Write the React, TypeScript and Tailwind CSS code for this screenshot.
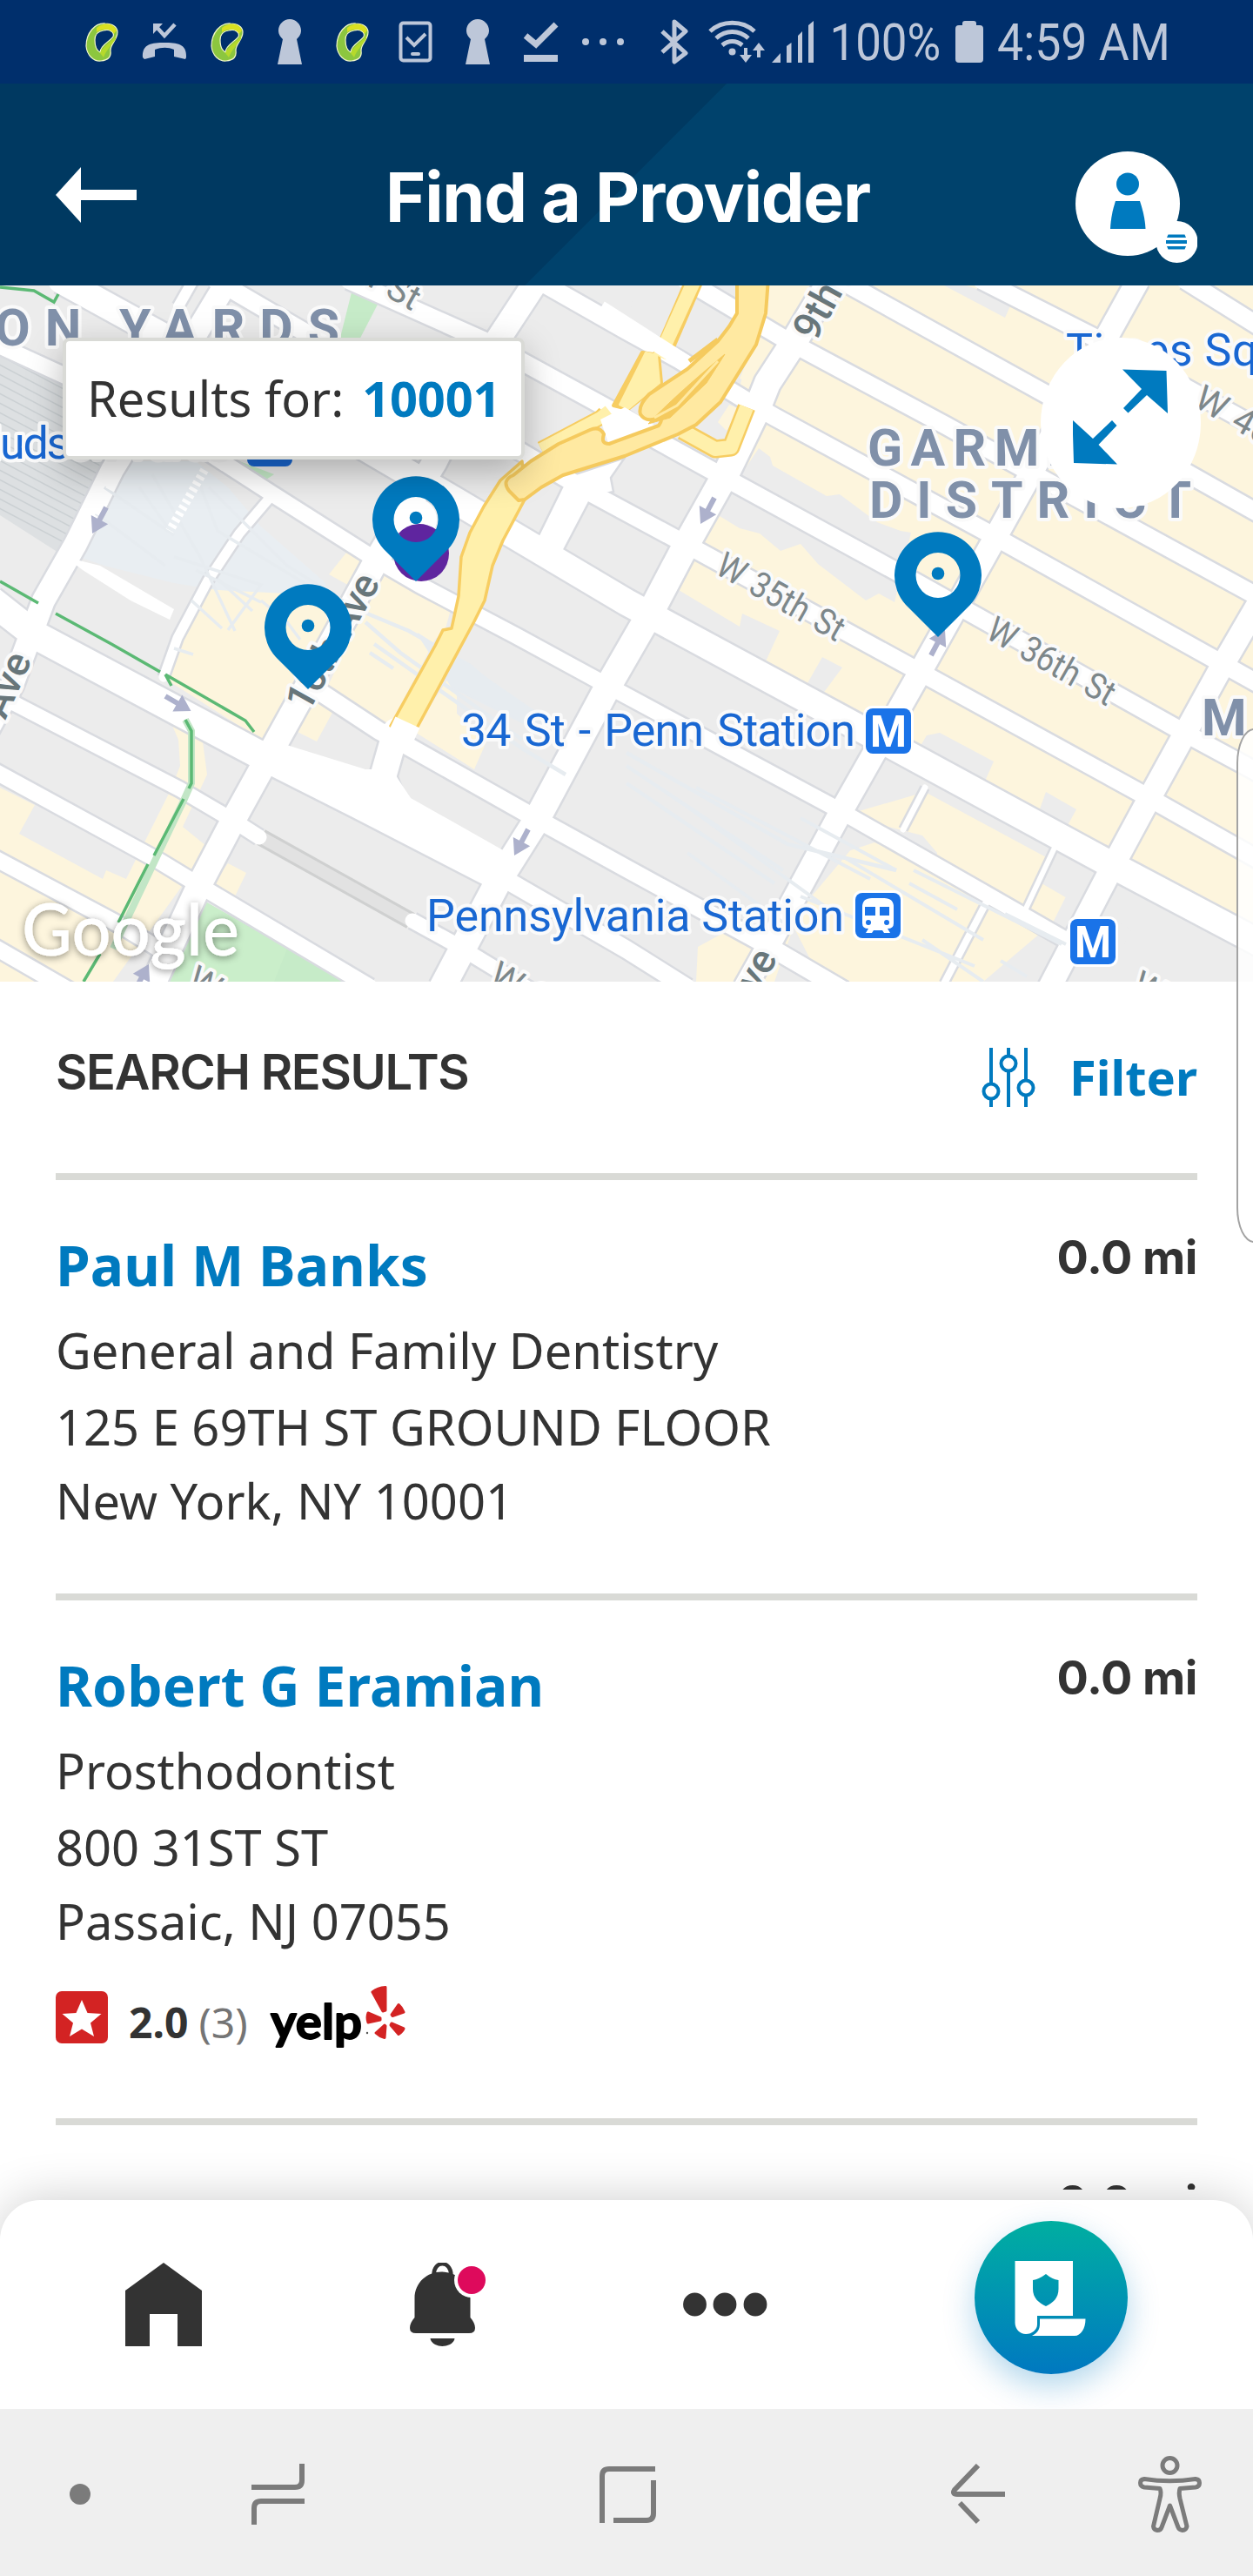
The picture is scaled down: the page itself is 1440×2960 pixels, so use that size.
import type { ReactNode } from "react";

const BLUE = "#007abf";
const STATUS = "#bdc7d9";

/* ---------- status bar ---------- */

function Cell({ children }: { children: ReactNode }) {
  return (
    <svg className="h-24 w-[72px] shrink-0" viewBox="0 0 72 96" fill={STATUS}>
      {children}
    </svg>
  );
}

function LoopIcon() {
  return (
    <Cell>
      <path
        fillRule="evenodd"
        fill="#8cc63f"
        stroke="#f2f7c9"
        strokeWidth="1.2"
        d="M40 27C28 26 18 38 18 53C19 64 27 71 35 70C44 69 47 65 46 58C46 50 54 46 54 37C54 31 48 27 40 27ZM38 35C45 33 51 37 49 42C46 47 34 52 34 60C30 58 28 52 28 46C28 40 31 36 38 35Z"
      />
      <path d="M30 32C38 25 50 26 53 35L50 39C47 33 38 32 30 37Z" fill="#d9e021" />
      <path d="M52 40C50 47 37 52 34 61L38 66C41 58 47 52 52 45Z" fill="#b5d92c" />
    </Cell>
  );
}

function KeyholeIcon() {
  return (
    <Cell>
      <path d="M36 22C43 22 49 28 49 35C49 40 46 43 44 45L50 74H22L28 45C26 43 23 40 23 35C23 28 29 22 36 22Z" />
    </Cell>
  );
}

function StatusBar() {
  return (
    <div className="flex h-24 shrink-0 items-center bg-[#002f6c] pl-[81px]">
      <LoopIcon />
      <Cell>
        <path d="M11 66C10 50 22 49 36 49C50 49 62 50 61 66L60 68L47 65V57C40 54 33 54 25 57V65L13 68Z" />
        <path d="M26 30L36 41L48 28" fill="none" stroke={STATUS} strokeWidth="4.5" />
        <path d="M23 27H34L23 39Z" />
      </Cell>
      <LoopIcon />
      <KeyholeIcon />
      <LoopIcon />
      <Cell>
        <rect x="19.500" y="26.500" width="34" height="43" rx="3" fill="none" stroke={STATUS} strokeWidth="4" />
        <path d="M26 43L35 52L48 39" fill="none" stroke={STATUS} strokeWidth="4" />
        <rect x="31" y="60" width="11" height="4" rx="2" />
      </Cell>
      <KeyholeIcon />
      <Cell>
        <path d="M19 41L31 51L54 28" fill="none" stroke={STATUS} strokeWidth="7" />
        <rect x="17" y="63" width="39" height="8" />
      </Cell>
      <Cell>
        <circle cx="16" cy="48" r="4" />
        <circle cx="36" cy="48" r="4" />
        <circle cx="56" cy="48" r="4" />
      </Cell>
      <svg className="ml-[21px] h-24 w-[48px] shrink-0" viewBox="750 0 48 96" fill="none" stroke={STATUS} strokeWidth="5">
        <path d="M761 36L788 61L775 71V25L788 36L761 60" strokeLinejoin="round" />
      </svg>
      <svg className="h-24 w-[152px] shrink-0" viewBox="798 0 152 96" fill={STATUS}>
        <g fill="none" stroke={STATUS} strokeWidth="5">
          <path d="M816 36C830 23 853 23 867 36" />
          <path d="M823 44C834 34 849 34 860 44" />
          <path d="M830 52C837 46 846 46 853 52" />
          <path d="M857 55V67M872 66V54" strokeWidth="4" />
        </g>
        <circle cx="841.500" cy="59.500" r="4" />
        <path d="M850 63H864L857 72ZM865 58L872 49L879 58Z" />
        <path d="M887 72L897 61V72ZM904 72V53L909.500 49V72ZM917 72V41L922 36V72ZM929 72V29L935 24V72Z" />
      </svg>
      <div className="flex h-24 w-[147px] items-center">
        <span className="origin-left scale-x-[0.88] pt-[2px] pl-[4px] font-[Roboto] text-[60px] leading-[96px] whitespace-nowrap text-[#bdc7d9]">
          100%
        </span>
      </div>
      <svg className="ml-px h-24 w-[32px] shrink-0" viewBox="0 0 32 96" fill={STATUS}>
        <path d="M8 29V27Q8 24 11 24H21Q24 24 24 27V29H28Q32 29 32 33V68Q32 72 28 72H4Q0 72 0 68V33Q0 29 4 29Z" />
      </svg>
      <span className="ml-[16px] origin-left scale-x-[0.895] pt-[2px] font-[Roboto] text-[60px] leading-[96px] whitespace-nowrap text-[#bdc7d9]">
        4:59 AM
      </span>
    </div>
  );
}

/* ---------- app header ---------- */

function Header() {
  return (
    <header className="flex h-[232px] shrink-0 items-start justify-between bg-[linear-gradient(135deg,#003961_0,#003961_calc(50%-1px),#00426c_50%)] px-16">
      <svg className="mt-[96px] h-[64px] w-[93px]" viewBox="0 0 93 64" fill="#fff">
        <path d="M0 32L29 0V26H93V38H29V64Z" />
      </svg>
      <h1 className="mt-[83px] ml-[50px] font-[Inter] text-[79px] leading-[94px] font-bold tracking-[-1.300px] whitespace-nowrap text-white">
        Find a Provider
      </h1>
      <svg className="mt-[78px] h-[128px] w-[140px]" viewBox="1236 174 140 128">
        <circle cx="1296" cy="234" r="60" fill="#fff" />
        <circle cx="1352.500" cy="278" r="24" fill="#fff" />
        <circle cx="1296" cy="211.500" r="13" fill={BLUE} />
        <path d="M1282 231H1310C1314 243 1316 253 1316.500 263H1276C1276.500 253 1278 243 1282 231Z" fill={BLUE} />
        <path d="M1342.500 269.500H1361.500L1363 273H1341ZM1340 276H1364V280H1340ZM1341 283H1363L1361.500 286.500H1342.500Z" fill={BLUE} />
      </svg>
    </header>
  );
}

/* ---------- map ---------- */

const streets: { d: string; w: number }[] = [
  { d: "M1362 322L1450 377", w: 20 },
  { d: "M1128 322L1262 390L1450 494", w: 20 },
  { d: "M966 322L1197 450L1363 543L1450 592", w: 20 },
  { d: "M788 322L904 391L1087 489L1179 540L1450 688", w: 20 },
  { d: "M618 322L720 380L780 413L862 463L890 479L1133 611L1400 760L1450 788", w: 20 },
  { d: "M401 322L555 391L707 474L748 502L835 550L1040 662L1363 843L1450 890", w: 20 },
  { d: "M248 322L390 405L600 520L680 567L795 629L1055 771L1321 917L1450 990", w: 20 },
  { d: "M70 322L190 388L400 503L523 575L720 692L1018 853L1276 993L1450 1085", w: 30 },
  { d: "M-10 393L75 432L239 520L312 567L427 640L482 672L592 730L693 785L959 928L1138 1030L1225 1080", w: 18 },
  { d: "M360 790L436 840L468 857L615 940L720 998L881 1086L970 1138", w: 20 },
  { d: "M-10 690L41 730L294 865L413 925L574 1008", w: 32 },
  { d: "M580 1010L720 1091L790 1135", w: 20 },
  { d: "M14 807L207 907L270 944L298 962", w: 17 },
  { d: "M474 1058L523 1085L610 1138", w: 17 },
  { d: "M-10 884L184 990L230 1018L425 1134", w: 18 },
  { d: "M-10 984L138 1063L190 1095", w: 18 },
  { d: "M-10 1086L80 1138", w: 18 },
  { d: "M955 322L908 400L882 440L868 475L835 543L789 625L747 705L698 790L615 945L574 1010L508 1135", w: 30 },
  { d: "M1308 322L1152 603L1057 773L968 930L883 1087L856 1135", w: 26 },
  { d: "M1460 670L1404 766L1321 917L1280 993L1206 1135", w: 26 },
  { d: "M617 322L569 395L500 530L432 645L390 722L330 830L271 937L230 1015L174 1135", w: 28 },
  { d: "M262 322L215 400L129 540L87 625L50 690L14 787L-15 840", w: 26 },
  { d: "M222 322L205 352", w: 12 },
  { d: "M310 572L275 613L239 667L204 733L188 778", w: 11 },
  { d: "M455 840L440 893L460 945", w: 30 },
  { d: "M1063 905L1038 953", w: 7 },
  { d: "M1212 974L1178 1046", w: 6 },
  { d: "M1135 1034L1085 1130", w: 8 },
];

const highwayLow = "M600 530L575 552L556 582L540 612L530 640L527 685L519 722L509 724L500 742L449 834L474 846L545 714L557 690L566 650L578 621L603 574Z";
const highwayHigh =
  "M847 320V360L838 375L825 392L790 424L746 453Q733 466 736 476Q742 486 757 480Q763 480 757 489L700 510Q690 510 694 499Q689 489 678 494L642 510L610 530L590 546Q576 552 585 564L596 575L603 574L622 560L647 546L718 524L779 499L800 488L828 462L869 396L880 360L883 320Z";

const arrows = [
  [122, 583, 118], [821, 572, 118], [190, 800, 30], [607, 953, 118], [1070, 753, -62], [155, 1138, -62],
];

const railStripes = Array.from({ length: 20 }, (_, i) => i);

function MapArt() {
  return (
    <svg className="block h-[800px] w-[1440px]" viewBox="0 328 1440 800" fontFamily="Roboto, sans-serif">
      <defs>
        <clipPath id="yard">
          <path d="M0 405L80 445L140 530L75 640L0 592Z" />
        </clipPath>
        <filter id="soft" x="-20%" y="-20%" width="140%" height="140%">
          <feDropShadow dx="0" dy="2" stdDeviation="4" floodColor="#000" floodOpacity="0.45" />
        </filter>
      </defs>
      <rect y="328" width="1440" height="800" fill="#ececec" />

      {/* commercial blocks */}
      <g fill="#fdf5dd">
        <path d="M880 328H1440V1075L1276 993L1018 853L738 706L835 543L868 475L850 445Z" />
        <path d="M1063 910L1230 1000L1240 1000L1210 1060L1130 1128H850L1000 950L960 940Z" />
        <path d="M802 1088L835 1070L870 1090L925 1128H800Z" />
        <path d="M225 690L250 645L300 665L390 690L398 700L330 828L300 850L190 780Z" />
        <path d="M440 655L519 697L512 722L500 735L449 832L470 840L430 835L375 792Z" />
        <path d="M402 630L422 640L405 675L378 660Z" />
        <path d="M355 800L383 817L364 852L340 840ZM475 840L515 780L525 800L525 820L560 850L545 884Z" />
        <path d="M0 905L40 925L22 958L118 1010L122 1000L145 1010L160 980L195 910L207 880L205 850L190 815L230 830L238 890L210 950L237 972L215 1010L130 1128H0Z" />
        <path d="M262 992L283 1003L270 1030L243 1018Z" />
      </g>
      <g fill="#ececec">
        <path d="M872 515L885 525L888 535L950 570L965 568L1008 600L1035 610L1047 612L1028 692L1010 682L995 690L940 648L920 625L897 633L873 613L850 607L822 590Z" />
        <path d="M780 678L850 720L853 705L896 725L880 760L755 700Z" />
        <path d="M1065 328H1110L1164 345L1155 365L1085 328Z" />
        <path d="M945 755L968 767L945 798L928 785ZM1065 845L1080 842L1142 875L1130 902L1056 860Z" />
        <path d="M1202 910L1237 930L1225 952L1193 935Z" />
        <path d="M1215 975L1265 1003L1240 1040L1197 1015Z" />
        <path d="M982 940L1060 960L1077 980L1075 990L1020 975L1005 968L975 978Z" />
        <path d="M1284 1014L1440 1095V1128H1272L1300 1068L1270 1052Z" />
        <path d="M730 328H870L850 420L720 510H700Z" />
        <path d="M912 1065L930 1100L955 1128H890Z" />
      </g>
      <path d="M872 385L898 402L870 442L850 435ZM838 465L850 470L835 495L825 485Z" fill="#fdf5dd" />

      {/* parks */}
      <g fill="#c6ebc8">
        <path d="M234 1035L399 1128H192Z" />
        <path d="M406 328L438 342L408 400H388Z" />
        <path d="M270 528L315 545L303 553L285 540Z" />
      </g>
      <path d="M234 1035L330 1090L315 1128H192Z" fill="#caeeca" />

      {/* rail yard */}
      <path d="M0 405L80 445L140 530L75 640L0 592Z" fill="#dde0e2" />
      <g clipPath="url(#yard)" stroke="#cbd0d3" strokeWidth="1.500">
        {railStripes.map((i) => (
          <path key={i} d={`M-10 ${370 + i * 11}L170 ${465 + i * 11}`} />
        ))}
      </g>
      <path d="M133 530H225L262 560L300 605L372 668L392 700L330 682L250 678L200 670L120 650L85 638Z" fill="#e9eef2" />

      {/* streets */}
      <g fill="none" stroke="#d9dbe0" strokeLinejoin="round">
        {streets.map((s) => (
          <path key={s.d} d={s.d} strokeWidth={s.w + 5} />
        ))}
        <path d="M300 962L472 1058" stroke="#cfd0d0" strokeWidth="20" />
        <path d="M300 962L472 1058" stroke="#e2e2e2" strokeWidth="14" />
      </g>
      <path d="M652 548L718 526L702 549L705 565L680 571L647 634L617 619Z" fill="#fff" stroke="#d9dbe0" strokeWidth="2.500" />
      <g fill="none" stroke="#fff" strokeLinejoin="round" strokeLinecap="round">
        {streets.map((s) => (
          <path key={s.d} d={s.d} strokeWidth={s.w} />
        ))}
      </g>
      <path d="M310 850L420 884L450 884L472 917L580 978L562 1014L465 962L422 946L300 878Z" fill="#fff" />

      {/* rail lines */}
      <g stroke="#e7ecf0" fill="none">
        <path d="M120 560L200 615M110 590L190 650M175 545L230 640M225 545L250 610L400 700M240 560L330 650L410 700M200 640L300 672L262 724M225 655L300 692M250 665L290 702M220 690L255 722M160 560L192 605M230 640L270 725M300 690L330 715L345 735M200 745L222 752" strokeWidth="3.500" />
        <path d="M410 700L470 725L540 765L640 850M420 715L460 750L600 850M430 740L600 860L650 890M425 750L452 768M720 880L900 1000M720 900L890 1015M720 865L905 970L1030 1000" strokeWidth="4.500" />
        <path d="M480 728L560 780L640 835L600 830L520 790Z" fill="#e7ecf0" strokeWidth="2" />
        <path d="M780 920L960 1050M800 905L1000 1010M920 1030L1120 1110M970 985L1130 1080M1050 1000L1220 1085M1045 1015L1100 1045M1060 1080L1130 1128M1155 1050L1225 1085M1150 1104L1180 1122M920 940L1030 1000M790 980L900 1060" strokeWidth="4" />
      </g>
      <g fill="none" stroke="#fff" strokeDasharray="4 4" strokeWidth="10">
        <path d="M235 540L195 610M135 545L90 630" />
      </g>
      <path d="M75 640L115 650L200 700L195 712L150 690L95 655Z" fill="#fff" />

      {/* highway ramps */}
      <g fill="none" strokeLinejoin="round">
        <g stroke="#f7cd62">
          <path d="M798 322L760 410" strokeWidth="21" />
          <path d="M757 408L760 440L722 470L705 466L738 405Z" fill="#f7cd62" strokeWidth="4" />
          <path d="M695 475L690 480L622 516" strokeWidth="18" />
          <path d="M784 495L822 516L840 514L858 468" strokeWidth="21" />
        </g>
        <g stroke="#fff0ab">
          <path d="M798 322L758 410" strokeWidth="16" />
          <path d="M755 408L758 440L722 470L712 465L742 405Z" fill="#fff0ab" strokeWidth="2" />
          <path d="M700 472L690 480L622 516" strokeWidth="14" />
          <path d="M784 495L822 516L840 514L858 468" strokeWidth="16" />
        </g>
        <path d={highwayLow} fill="#fff0ab" stroke="#f7cd62" strokeWidth="3.500" />
        <path d="M690 354L790 418" stroke="#fff" strokeWidth="18" />
        <path d="M690 482L718 468L748 486L757 492L700 512Z" fill="#fff" />
        <path d={highwayHigh} fill="#ffe9a1" stroke="#f5ca5e" strokeWidth="4" />
        <path d="M833 407L812 440L770 480L745 487Q775 455 833 407Z" fill="#f5ca5e" stroke="#f5ca5e" strokeWidth="1" />
        <path d="M825 415L778 466L752 480" stroke="#ffe9a1" strokeWidth="3" />
        <path d="M825 390L792 415" stroke="#f5ca5e" strokeWidth="5" />
      </g>
      <path d="M450 833L478 846" stroke="#fff" strokeWidth="21" />

      {/* bike routes */}
      <g fill="none">
        <path d="M213 827L220 840V900L211 920L168 1010L130 1090" stroke="#c2e6c6" strokeWidth="8" />
        <g stroke="#5bb974" strokeWidth="3.500">
          <path d="M0 330L39 334L62 347L67 338M0 668L44 693M64 705L128 740L184 772M190 775L282 828L292 841M190 775L197 788" />
          <path d="M213 827L220 840V900L217 906M211 918L177 983M170 993L136 1060M115 1096L96 1128" />
        </g>
      </g>

      {arrows.map(([x, y, r]) => (
        <path key={`${x}-${y}`} transform={`translate(${x} ${y}) rotate(${r})`} d="M0 -3H16V-11L34 0L16 11V3H0Z" fill="#adb1cc" />
      ))}

      {/* labels */}
      <g stroke="#fafafa" strokeWidth="8" paintOrder="stroke" strokeLinejoin="round">
        <g fill="#8090a9" fontWeight="700" fontSize="59">
          <text x="-6" y="397" letterSpacing="17">ON</text>
          <text x="137" y="397" textLength="253">YARDS</text>
          <text x="997" y="535" textLength="336">GARMENT</text>
          <text x="999" y="595" textLength="370">DISTRICT</text>
          <text x="1381" y="845">M</text>
        </g>
        <g fill="#1967d2" fontSize="52">
          <text x="-35" y="527" textLength="300">Hudson Yards</text>
          <text x="530" y="857" textLength="453" wordSpacing="4">34 St - Penn Station</text>
          <text x="490" y="1070" textLength="480">Pennsylvania Station</text>
          <text x="1225" y="420" letterSpacing="0.500">Times Sq</text>
        </g>
        <g fill="#7d878a" fontSize="41" wordSpacing="3">
          <text transform="translate(820 658) rotate(29.500)" textLength="162" lengthAdjust="spacingAndGlyphs">W 35th St</text>
          <text transform="translate(1131 732) rotate(29.500)" textLength="162" lengthAdjust="spacingAndGlyphs">W 36th St</text>
          <text transform="translate(1370 466) rotate(29.500)">W 40th St</text>
          <text transform="translate(358 292) rotate(29.500)" textLength="133">38th St</text>
          <text transform="translate(213 1133) rotate(29.500)">W 29th St</text>
          <text transform="translate(560 1128) rotate(29.500)">W 30th St</text>
          <text transform="translate(1298 1139) rotate(29.500)">W 34th St</text>
        </g>
        <g fill="#68767a" fontSize="46" fontWeight="500">
          <text transform="translate(937 394) rotate(-61)">9th Ave</text>
          <text transform="translate(354 820) rotate(-61)" textLength="172">10th Ave</text>
          <text transform="translate(6 828) rotate(-66)">Ave</text>
          <text transform="translate(857 1168) rotate(-61)">Ave</text>
        </g>
      </g>

      {/* transit badges */}
      <g>
        <rect x="284" y="484" width="52" height="52" rx="8" fill="#1967d2" />
        {[[995, 814], [1230, 1056]].map(([x, y]) => (
          <g key={x}>
            <rect x={x - 3} y={y - 3} width="58" height="58" rx="10" fill="#fff" />
            <rect x={x} y={y} width="52" height="52" rx="8" fill="#1a73e8" />
            <text x={x + 26} y={y + 44} fontSize="50" fontWeight="700" fill="#fff" textAnchor="middle" textLength="42" lengthAdjust="spacingAndGlyphs">
              M
            </text>
          </g>
        ))}
        <rect x="980" y="1023" width="58" height="58" rx="10" fill="#fff" />
        <rect x="983" y="1026" width="52" height="52" rx="8" fill="#1a73e8" />
        <path d="M991 1042Q991 1032 1002 1032H1016Q1027 1032 1027 1042V1061Q1027 1067 1020 1067L1023 1072H1016L1014 1069H1004L1002 1072H995L998 1067Q991 1067 991 1061Z" fill="#fff" />
        <path d="M994 1042H1006V1052H994ZM1011 1042H1022V1052H1011Z" fill="#1a73e8" />
        <circle cx="998" cy="1060" r="3" fill="#1a73e8" />
        <circle cx="1019" cy="1060" r="3" fill="#1a73e8" />
      </g>
      <text x="25" y="1098" fontFamily="Lato" fontWeight="500" fontSize="83" fill="#fff" textLength="250" lengthAdjust="spacingAndGlyphs" filter="url(#soft)">
        Google
      </text>

      {/* provider pins */}
      <circle cx="484" cy="636" r="32" fill="#5f259f" />
      <circle cx="478" cy="597" r="24" fill="#fff" />
      <path d="M458 613A32 32 0 0 1 502 609A25 25 0 0 1 458 613Z" fill="#5f259f" />
      {[[428, 548], [304, 672], [1028, 612]].map(([x, y]) => (
        <g key={x} transform={`translate(${x} ${y})`} fill={BLUE}>
          <path fillRule="evenodd" d="M50 120L13 83A50 50 0 1 1 87 83ZM50 23A25.500 26 0 1 0 50 75A25.500 26 0 1 0 50 23Z" />
          <circle cx="50" cy="47" r="7.300" />
        </g>
      ))}
    </svg>
  );
}

function MapPanel() {
  return (
    <section className="relative h-[800px] shrink-0 overflow-hidden">
      <MapArt />
      <div className="absolute top-[60px] left-[72px] flex h-[140px] w-[531px] items-center rounded-lg border-4 border-[#d9dad6] bg-white pb-[2px] pl-[24px] font-['Noto_Sans'] text-[56px] leading-[80px] whitespace-nowrap text-[#333] shadow-[0_14px_40px_rgba(0,0,0,0.28)]">
        <span>Results for:</span>
        <span className="ml-[21px] font-bold tracking-[-0.200px] text-[#007abf]">10001</span>
      </div>
      <button className="absolute top-[60px] left-[1196px] flex h-[196px] w-[184px] items-center justify-center rounded-[50%] bg-white">
        <svg className="-mt-[14px] h-[110px] w-[110px]" viewBox="1233 424 110 110" fill={BLUE}>
          <path d="M1290 424.500L1340.500 426L1342 475L1318 454L1296.500 474.500L1291 469L1312 447Z" />
          <path d="M1284 533.500L1234 532L1232.500 482.500L1256 504L1278 483L1283.500 489L1262.500 511Z" />
        </svg>
      </button>
    </section>
  );
}

/* ---------- results ---------- */

function YelpRating() {
  return (
    <div className="mt-[33px] flex h-[72px] items-start">
      <svg className="mt-[8px] h-[60px] w-[60px]" viewBox="0 0 60 60">
        <rect width="60" height="60" rx="7" fill="#d32323" />
        <path d="M30 10L36.500 25L52.500 26L40 36.500L44 52L30 43.500L16 52L20 36.500L7.500 26L23.500 25Z" fill="#fff" />
      </svg>
      <span className="mt-[10px] ml-[24px] text-[48px] leading-[68px] font-bold text-[#333]">2.0</span>
      <span className="mt-[10px] ml-[12px] text-[48px] leading-[68px] text-[#757575]">(3)</span>
      <svg className="mt-0 ml-[23px] h-[80px] w-[164px] overflow-visible" viewBox="306 2280 164 80">
        <text x="309" y="2343" fontFamily="Lato" fontWeight="700" fontSize="56" stroke="#000" strokeWidth="1.800" strokeLinejoin="round" textLength="105" lengthAdjust="spacingAndGlyphs">
          yelp
        </text>
        <circle cx="420" cy="2336" r="1.200" fill="#555" />
        <g fill="#d32323" stroke="#d32323" strokeWidth="3" strokeLinejoin="round">
          <path d="M441 2283.500V2310L438 2311L426 2289Q432 2284 441 2283.500Z" />
          <path d="M421 2313L435 2319V2321L421 2324Q419 2318 421 2313Z" />
          <path d="M430 2336L440 2327L441 2328L440 2341.500Q434 2340 430 2336Z" />
          <path d="M448 2325L462 2331Q461 2334 456 2337.500L447 2327Z" />
          <path d="M448 2315L456 2303.500Q460 2307 462 2312L449 2316.500Z" />
        </g>
      </svg>
    </div>
  );
}

interface Provider {
  name: string;
  distance: string;
  specialty: string;
  street: string;
  city: string;
  rated?: boolean;
}

const providers: Provider[] = [
  { name: "Paul M Banks", distance: "0.0 mi", specialty: "General and Family Dentistry", street: "125 E 69TH ST GROUND FLOOR", city: "New York, NY 10001" },
  { name: "Robert G Eramian", distance: "0.0 mi", specialty: "Prosthodontist", street: "800 31ST ST", city: "Passaic, NJ 07055", rated: true },
];

function Distance({ children }: { children: ReactNode }) {
  return (
    <span className="mt-[3px] font-[Inter] text-[54px] leading-[64px] font-bold tracking-[-0.500px] whitespace-nowrap text-[#333]">
      {children}
    </span>
  );
}

function ProviderRow({ p }: { p: Provider }) {
  return (
    <li className={p.rated ? "flex h-[603px] justify-between border-b-8 border-[#d9dad6] pt-[54px]" : "flex h-[483px] justify-between border-b-8 border-[#d9dad6] pt-[54px]"}>
      <div className="text-[56px] leading-[80px] whitespace-nowrap text-[#333]">
        <h3 className="text-[64px] leading-[88px] font-bold tracking-[0.100px] text-[#007abf]">{p.name}</h3>
        <p className="mt-[13px]">{p.specialty}</p>
        <p className="mt-[8px]">{p.street}</p>
        <p className="mt-[5px]">{p.city}</p>
        {p.rated && <YelpRating />}
      </div>
      <Distance>{p.distance}</Distance>
    </li>
  );
}

function Results() {
  return (
    <main className="h-[1388px] shrink-0 overflow-hidden bg-white px-16 font-['Noto_Sans']">
      <div className="flex h-[228px] items-start justify-between border-b-8 border-[#d9dad6]">
        <h2 className="mt-[72px] font-[Inter] text-[56px] leading-[64px] font-semibold tracking-[-1.300px] whitespace-nowrap text-[#333]">
          SEARCH RESULTS
        </h2>
        <div className="mt-[69px] flex items-start">
          <svg className="mt-[7px] mr-[39px] h-[68px] w-[62px]" viewBox="0 0 62 68" fill="none" stroke={BLUE} strokeWidth="4">
            <path d="M11 0V41M11 59V68M31 0V9M31 27V68M51 0V37M51 55V68" />
            <circle cx="11" cy="50" r="8.500" />
            <circle cx="31" cy="18" r="8.500" />
            <circle cx="51" cy="46" r="8.500" />
          </svg>
          <span className="text-[56px] leading-[80px] font-bold text-[#007abf]">Filter</span>
        </div>
      </div>
      <ul>
        {providers.map((p) => (
          <ProviderRow key={p.name} p={p} />
        ))}
        <li className="flex justify-end pt-[54px]">
          <Distance>0.0 mi</Distance>
        </li>
      </ul>
    </main>
  );
}

/* ---------- bottom bars ---------- */

function TabBar() {
  return (
    <nav className="relative z-10 mt-[12px] flex h-[240px] shrink-0 items-start rounded-t-[46px] bg-white pl-[144px] shadow-[0_0_56px_rgba(0,0,0,0.2)]">
      <svg className="mt-[72px] h-[96px] w-[88px]" viewBox="0 0 88 96" fill="#333">
        <path d="M44 0L88 32V96H60V59H28V96H0V32Z" />
      </svg>
      <svg className="mt-[72px] ml-[239px] h-[96px] w-[88px]" viewBox="471 2600 88 96">
        <path d="M498.500 2614C498.500 2597 518 2597 518.500 2614" fill="none" stroke="#333" strokeWidth="4.500" />
        <path d="M508 2610.500C492 2610 476.500 2622 476.500 2641V2663C473 2667 471 2671 471 2675Q471 2681 478 2681H539Q546 2681 546 2675C546 2671 544 2667 540.500 2663V2641C540.500 2622 524 2611 508 2610.500Z" fill="#333" />
        <path d="M494.500 2687H522.500Q522 2691 517 2694Q508 2698 500 2694Q495 2691 494.500 2687Z" fill="#333" />
        <circle cx="542" cy="2620" r="20" fill="#fff" />
        <circle cx="542" cy="2620" r="16" fill="#de0a5c" />
      </svg>
      <svg className="mt-[106px] ml-[226px] h-[28px] w-[98px]" viewBox="785 2634 98 28" fill="#333">
        <circle cx="798.500" cy="2648" r="13.400" />
        <circle cx="833" cy="2648" r="13.400" />
        <circle cx="868" cy="2648" r="13.400" />
      </svg>
      <button className="mt-[24px] ml-[237px] flex h-[176px] w-[176px] items-center justify-center rounded-full bg-linear-to-b from-[#00aea0] to-[#0078c0] shadow-[0_14px_36px_rgba(0,122,191,0.3)]">
        <svg className="mt-[1px] -ml-[2px] h-[86px] w-[82px]" viewBox="1166 2597 82 86" fill="#fff">
          <path
            fillRule="evenodd"
            d="M1166.500 2597H1233V2660H1192V2670C1192 2676 1186 2681 1179 2681C1172 2681 1166.500 2675 1166.500 2668ZM1202 2612Q1194 2618 1187 2619V2629C1187 2640 1194 2645 1202 2649C1210 2645 1216.500 2640 1216.500 2629V2619Q1209 2618 1202 2612Z"
          />
          <path d="M1195 2663.500H1247.500C1247.500 2675 1242 2683 1235 2683H1186C1192 2680 1195 2676 1195 2669Z" />
        </svg>
      </button>
    </nav>
  );
}

function SystemBar() {
  return (
    <footer className="relative z-10 flex h-[192px] shrink-0 items-center bg-[#efefef] pt-[4px] pl-[80px]">
      <span className="h-6 w-6 rounded-full bg-[#7b7b7b]" />
      <svg className="ml-[185px] h-[70px] w-[61px]" viewBox="0 0 61 70" fill="none" stroke="#7b7b7b" strokeWidth="6">
        <path d="M0 27H50Q58 27 58 19V0M61 43H11Q3 43 3 51V70" />
      </svg>
      <svg className="ml-[339px] h-[65px] w-[65px]" viewBox="0 0 65 65" fill="none" stroke="#7b7b7b" strokeWidth="6">
        <path d="M3 65V11Q3 3 11 3H64M16 62H54Q62 62 62 54V16" />
      </svg>
      <svg className="ml-[339px] h-[70px] w-[63px]" viewBox="0 0 63 70" fill="none" stroke="#7b7b7b" strokeWidth="6">
        <path d="M31 2L4 30Q1 35 7 35H62M10 45L31 67" />
      </svg>
      <svg className="ml-[151px] h-[90px] w-[74px]" viewBox="1306 2821 74 90" fill="none" stroke="#7b7b7b" strokeWidth="5" strokeLinejoin="round">
        <circle cx="1343.500" cy="2833" r="8.500" />
        <path d="M1314 2848.500Q1343 2853 1373 2848.500Q1377.500 2849 1377.500 2853Q1377.500 2857.500 1373 2858L1355 2859.500Q1353.500 2864 1355 2871L1363 2903Q1362 2907.500 1358 2907.500Q1354 2907 1353 2904L1343.500 2879L1334 2904Q1333 2907.500 1329 2907.500Q1325 2907 1324.500 2903L1332 2871Q1334 2864 1332 2859.500L1314 2858Q1309.500 2857 1309.500 2853Q1309.500 2849 1314 2848.500Z" />
      </svg>
    </footer>
  );
}

export default function App() {
  return (
    <div className="relative flex h-[2960px] w-[1440px] flex-col overflow-hidden bg-white">
      <StatusBar />
      <Header />
      <MapPanel />
      <Results />
      <TabBar />
      <SystemBar />
      <div className="absolute top-[837px] left-[1421px] h-[591px] w-[40px] rounded-l-[20px_40px] border-2 border-[#a3a3a3] bg-white/85" />
    </div>
  );
}
